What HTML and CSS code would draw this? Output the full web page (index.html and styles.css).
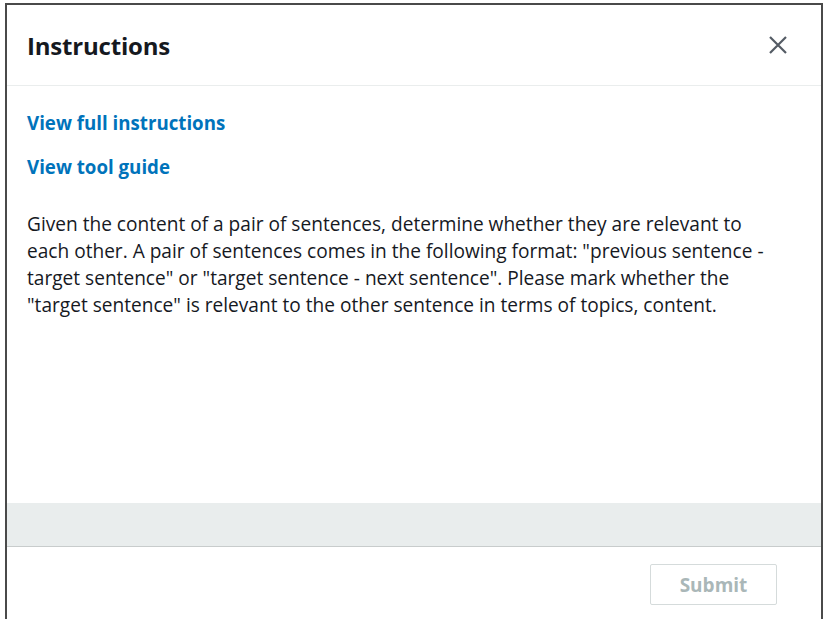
FILE: index.html
```html
<!DOCTYPE html>
<html>
<head>
<meta charset="utf-8">
<link rel="stylesheet" href="styles.css">
</head>
<body>
<div class="modal">
  <div class="modal-header">
    <h2 class="title">Instructions</h2>
    <button class="close" aria-label="Close">
      <svg width="20" height="20" viewBox="0 0 20 20"><path d="M2 2 L18 18 M18 2 L2 18" stroke="#545b64" stroke-width="2.2" fill="none"/></svg>
    </button>
  </div>
  <div class="modal-body">
    <a class="link" href="#">View full instructions</a>
    <a class="link" href="#">View tool guide</a>
    <p class="text">Given the content of a pair of sentences, determine whether they are relevant to each other. A pair of sentences comes in the following format: "previous sentence - target sentence" or "target sentence - next sentence". Please mark whether the "target sentence" is relevant to the other sentence in terms of topics, content.</p>
  </div>
  <div class="band"></div>
  <div class="modal-footer">
    <button class="submit" disabled>Submit</button>
  </div>
</div>
</body>
</html>
```
FILE: styles.css
```css
html, body { margin: 0; padding: 0; background: #fff; }
body { font-family: "Open Sans", "Noto Sans", sans-serif; color: #16191f; }
.modal {
  margin: 3px 0 0 5px;
  width: 814px;
  height: 614px;
  border: 2px solid #4a4a4a;
  border-bottom: none;
  display: flex;
  flex-direction: column;
}
.modal-header {
  height: 81px;
  border-bottom: 1px solid #eaeded;
  display: flex;
  align-items: center;
  justify-content: space-between;
  padding: 0 33px 0 20px;
  box-sizing: border-box;
  flex: none;
}
.title { margin: 0; font-size: 24px; font-weight: 700; letter-spacing: -0.2px; }
.close { border: none; background: none; padding: 0; width: 20px; height: 20px; display: flex; }
.modal-body {
  flex: 1;
  padding: 25px 44px 0 20px;
  display: flex;
  flex-direction: column;
  align-items: flex-start;
}
.link {
  color: #0073bb; font-weight: 700; font-size: 18.7px; text-decoration: none;
  line-height: 24px; margin-bottom: 20px;
}
.text { margin: 12px 0 0; font-size: 19.1px; line-height: 27px; color: #16191f; }
.band { height: 43px; background: #e9eded; border-bottom: 1px solid #c8cccc; flex: none; }
.modal-footer {
  height: 72px; flex: none; display: flex; justify-content: flex-end; align-items: flex-start;
  padding: 17px 44px 0 0; box-sizing: border-box;
}
.submit {
  width: 127px; height: 41px; border: 1px solid #d5dbdb; border-radius: 2px; background: #fff;
  font-family: "Open Sans", sans-serif; font-weight: 700; font-size: 19px; color: #aab7b8;
}
```
